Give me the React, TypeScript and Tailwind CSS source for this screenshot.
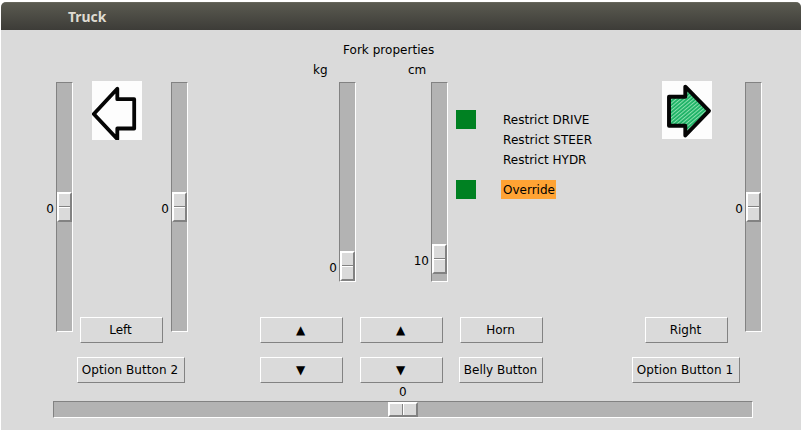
import type { ReactNode } from "react";

function Thumb({ horizontal = false }: { horizontal?: boolean }) {
  return (
    <div
      className={
        "flex border-2 border-t-white border-l-white border-r-[#828282] border-b-[#828282] bg-[#dadada] " +
        (horizontal ? "h-[15px] w-[30px] flex-row" : "h-[30px] w-[15px] flex-col")
      }
    >
      <div className={horizontal ? "w-[13px] border-r border-[#828282]" : "h-[13px] border-b border-[#828282]"} />
      <div className={horizontal ? "w-[13px] border-l border-white" : "h-[13px] border-t border-white"} />
    </div>
  );
}

type SliderProps = { value: number; offset: number; className: string; track: string };

function VerticalSlider({ value, offset, className, track }: SliderProps) {
  return (
    <div className={"flex shrink-0 items-start gap-[2px] " + className}>
      <div className="w-[20px] text-right" style={{ paddingTop: offset + 11 }}>
        {value}
      </div>
      <div
        className={
          "w-[17px] border border-t-[#828282] border-l-[#828282] border-r-white border-b-white bg-[#b3b3b3] " + track
        }
        style={{ paddingTop: offset }}
      >
        <Thumb />
      </div>
    </div>
  );
}

function Button({ children, className = "w-[83px]" }: { children: ReactNode; className?: string }) {
  return (
    <button
      className={
        "flex h-[26px] shrink-0 items-center justify-center border border-t-white border-l-white border-r-[#828282] border-b-[#828282] bg-[#dadada] pr-[2px] pb-px whitespace-nowrap " +
        className
      }
    >
      {children}
    </button>
  );
}

function LeftArrow() {
  return (
    <svg width="50" height="59" viewBox="0 0 50 59" className="ml-[19px] bg-[#fdfdfd]">
      <path
        d="M1.8 33 25.3 7.7V18.2H42.2V47.5H25.3V58Z"
        fill="#fdfdfd"
        stroke="#050505"
        strokeWidth="3.8"
        strokeLinejoin="round"
      />
    </svg>
  );
}

function RightArrow() {
  return (
    <svg width="50" height="58" viewBox="0 0 50 58" className="ml-[30px] bg-[#fdfdfd]">
      <defs>
        <pattern id="hatch" width="2.8" height="2.8" patternUnits="userSpaceOnUse" patternTransform="rotate(-40)">
          <rect width="2.8" height="2.8" fill="#17b062" />
          <rect width="2.8" height="1.1" fill="#8adfad" />
        </pattern>
      </defs>
      <path
        d="M47 29.8 23.3 5.7V15.7H7V44.7H23.3V54.5Z"
        fill="url(#hatch)"
        stroke="#050505"
        strokeWidth="3.9"
        strokeLinejoin="round"
      />
    </svg>
  );
}

export default function App() {
  return (
    <div className="h-[431px] w-[802px] bg-white pt-[2px] pl-px font-['DejaVu_Sans',sans-serif] text-[12px] leading-[14px] text-black">
      <div className="flex h-[428px] w-[800px] flex-col overflow-hidden rounded-t-[5px] bg-[#dadada]">
        <header className="flex h-[28px] shrink-0 items-center border-t border-[#66665b] bg-linear-to-b from-[#5a5a50] to-[#3d3c38] pl-[67px] font-['Noto_Sans',sans-serif] text-[13.9px] font-bold text-[#dfdbd2]">
          Truck
        </header>

        <div className="flex h-[313px] shrink-0 items-start">
          <VerticalSlider value={0} offset={109} className="mt-[52px] ml-[33px]" track="h-[250px]" />
          <div className="flex h-full w-[90px] shrink-0 flex-col justify-between pt-[51px]">
            <LeftArrow />
            <Button className="ml-[7px] w-[83px]">Left</Button>
          </div>
          <VerticalSlider value={0} offset={109} className="mt-[52px] -ml-[14px]" track="h-[250px]" />

          <div className="ml-[72px] flex h-full w-[188px] shrink-0 flex-col pt-[13px]">
            <div className="pl-[83px] tracking-[0.03px] whitespace-nowrap">Fork properties</div>
            <div className="mt-[6px] flex h-[14px] pl-[53px]">
              <span className="w-[95px]">kg</span>
              <span>cm</span>
            </div>
            <div className="mt-[5px] flex pl-[57px]">
              <VerticalSlider value={0} offset={168} className="" track="h-[200px]" />
              <VerticalSlider value={10} offset={161} className="ml-[53px]" track="h-[200px]" />
            </div>
            <div className="mt-auto flex gap-[17px]">
              <Button>▲</Button>
              <Button>▲</Button>
            </div>
          </div>

          <div className="ml-[8px] flex h-full w-[176px] shrink-0 flex-col pt-[80px]">
            <div className="flex h-[20px]">
              <div className="h-[19px] w-[20px] bg-[#008122]" />
              <span className="ml-[27px] pt-[3px]">Restrict DRIVE</span>
            </div>
            <div className="h-[20px] pt-[3px] pl-[47px] tracking-[0.08px]">Restrict STEER</div>
            <div className="h-[20px] pt-[3px] pl-[47px]">Restrict HYDR</div>
            <div className="mt-[10px] flex h-[19px]">
              <div className="h-[19px] w-[20px] bg-[#008122]" />
              <span className="ml-[25px] w-[55px] bg-[#ffa334] pt-[3px] pl-[2px]">Override</span>
            </div>
            <Button className="mt-auto ml-[4px] w-[83px]">Horn</Button>
          </div>

          <div className="flex h-full w-[96px] shrink-0 flex-col justify-between pt-[51px]">
            <RightArrow />
            <Button className="ml-[13px] w-[83px]">Right</Button>
          </div>
          <VerticalSlider value={0} offset={109} className="mt-[52px] -ml-[5px]" track="h-[250px]" />
        </div>

        <div className="mt-[14px] flex shrink-0">
          <Button className="ml-[76px] w-[108px] tracking-[0.05px]">Option Button 2</Button>
          <Button className="ml-[75px] w-[83px]">▼</Button>
          <Button className="ml-[17px] w-[83px]">▼</Button>
          <Button className="ml-[16px] w-[84px] pl-px">Belly Button</Button>
          <Button className="ml-[89px] w-[108px] tracking-[0.05px]">Option Button 1</Button>
        </div>

        <div className="mt-[2px] ml-[52px] w-[700px] shrink-0">
          <div className="h-[16px] pl-[346px]">0</div>
          <div className="h-[17px] border border-t-[#828282] border-l-[#828282] border-r-white border-b-white bg-[#b3b3b3] pl-[334px]">
            <Thumb horizontal />
          </div>
        </div>
      </div>
    </div>
  );
}
